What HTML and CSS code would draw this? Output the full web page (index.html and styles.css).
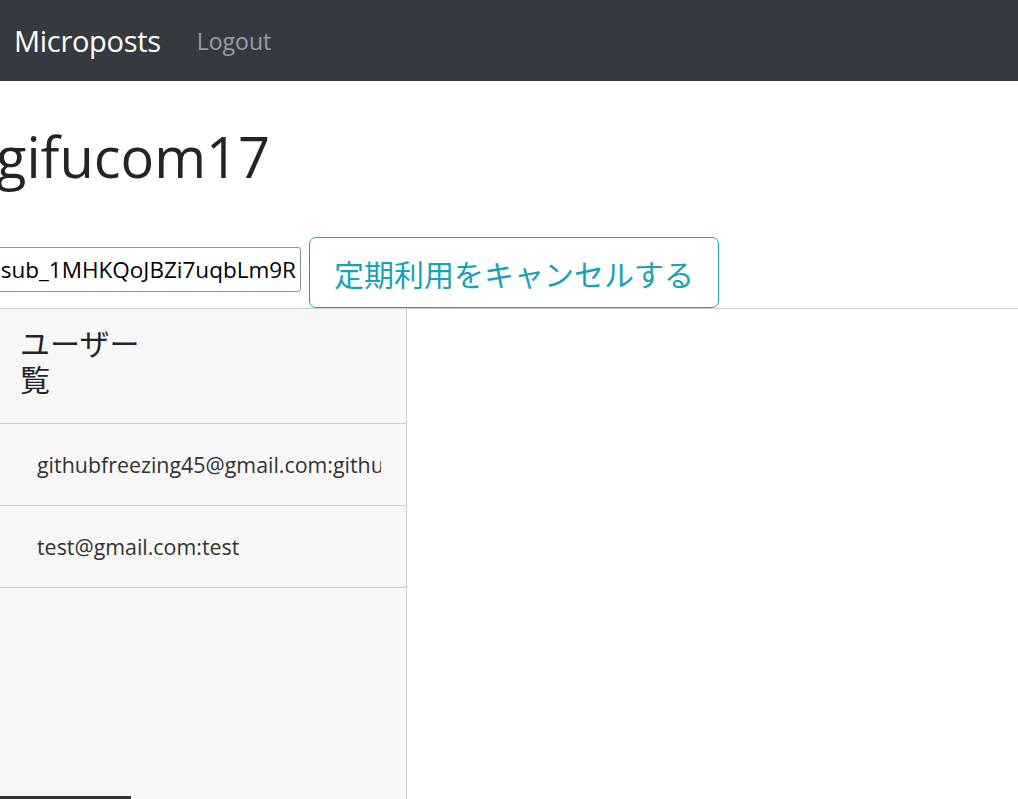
FILE: index.html
```html
<!DOCTYPE html>
<html lang="ja">
<head>
<meta charset="utf-8">
<title>Microposts</title>
<link rel="stylesheet" href="styles.css">
</head>
<body>
<nav class="navbar">
  <a class="brand" href="#">Microposts</a>
  <a class="nav-link" href="#">Logout</a>
</nav>
<main class="main">
  <h1 class="title">gifucom17</h1>
  <div class="sub-row">
    <input class="sub-input" type="text" value="sub_1MHKQoJBZi7uqbLm9R" readonly>
    <button class="btn-cancel" type="button">定期利用をキャンセルする</button>
  </div>
  <div class="split">
    <aside class="sidebar">
      <div class="side-head">
        <h4 class="side-title">ユーザー覧</h4>
      </div>
      <ul class="user-list">
        <li class="user-item"><span class="user-text">githubfreezing45@gmail.com:githubfreezing45</span></li>
        <li class="user-item"><span class="user-text">test@gmail.com:test</span></li>
      </ul>
    </aside>
    <section class="content"></section>
  </div>
</main>
<div class="scroll-thumb"></div>
</body>
</html>
```
FILE: styles.css
```css
html, body {
  margin: 0;
  padding: 0;
  height: 100%;
  overflow: hidden;
}
body {
  font-family: "Open Sans", "Noto Sans CJK JP", sans-serif;
  color: #212529;
  background: #fff;
}
.navbar {
  height: 81px;
  background: #343a40;
  display: flex;
  align-items: center;
  padding-left: 14px;
  box-sizing: border-box;
}
.brand {
  color: #fff;
  text-decoration: none;
  font-size: 29px;
  margin-right: 36px;
  letter-spacing: -0.3px;
}
.nav-link {
  color: rgba(255,255,255,0.5);
  text-decoration: none;
  font-size: 23px;
}
.main {
  display: flex;
  flex-direction: column;
}
.title {
  font-weight: 400;
  font-size: 56px;
  line-height: 67px;
  margin: 0;
  padding-top: 42px;
  margin-left: -4px;
  color: #212529;
}
.sub-row {
  display: flex;
  align-items: flex-end;
  margin-left: -30px;
  margin-top: 47px;
}
.sub-input {
  width: 331px;
  height: 45px;
  box-sizing: border-box;
  border: 1px solid #8f8f9d;
  border-radius: 3px;
  font-family: "Open Sans", sans-serif;
  font-size: 22.5px;
  padding: 0 4px;
  text-align: right;
  color: #000;
  margin-bottom: 16px;
  margin-right: 8px;
  background: #fff;
}
.btn-cancel {
  width: 410px;
  height: 71px;
  box-sizing: border-box;
  background: #fff;
  border: 1px solid #17a2b8;
  border-radius: 7px;
  color: #17a2b8;
  font-family: "Noto Sans CJK JP", sans-serif;
  font-size: 30px;
  padding: 0;
}
.split {
  display: flex;
  border-top: 1px solid #ccc;
  height: 500px;
}
.sidebar {
  width: 407px;
  background: #f7f7f7;
  border-right: 1px solid #ccc;
  box-sizing: border-box;
  flex-shrink: 0;
}
.side-head {
  padding: 15px 0 27px 20px;
  border-bottom: 1px solid #ccc;
}
.side-title {
  font-family: "Noto Sans CJK JP", sans-serif;
  font-weight: 400;
  font-size: 30px;
  line-height: 36px;
  width: 125px;
  margin: 0;
  color: #212529;
}
.user-list {
  list-style: none;
  margin: 0;
  padding: 0;
}
.user-item {
  height: 82px;
  box-sizing: border-box;
  border-bottom: 1px solid #ccc;
  padding: 0 25px 0 37px;
  display: flex;
  align-items: center;
}
.user-text {
  display: block;
  font-size: 21.4px;
  color: #333;
  white-space: nowrap;
  overflow: hidden;
  min-width: 0;
}
.content {
  flex: 1;
}
.scroll-thumb {
  position: fixed;
  left: 0;
  bottom: 0;
  width: 131px;
  height: 3px;
  background: #333;
}
```
